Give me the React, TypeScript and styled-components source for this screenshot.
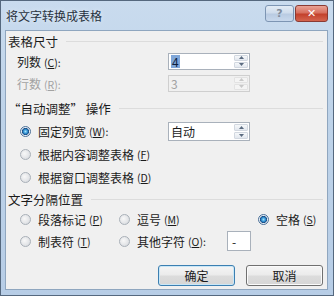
import React from 'react';
import styled, { createGlobalStyle } from 'styled-components';

const GlobalStyle = createGlobalStyle`
  html, body {
    margin: 0;
    padding: 0;
    background: #ffffff;
  }
  body {
    font-family: "Noto Sans CJK SC", "Liberation Sans", sans-serif;
    font-size: 12px;
    color: #1b1b1b;
  }
`;

const Window = styled.div`
  width: 334px;
  height: 296px;
  box-sizing: border-box;
  border: 1px solid #55687e;
  background: linear-gradient(180deg, #c9dbee 0%, #bed3e9 40%, #b7cde6 100%);
  display: flex;
  flex-direction: column;
`;

const TitleBar = styled.div`
  height: 29px;
  display: flex;
  align-items: flex-start;
  padding: 0 5px 0 5px;
`;

const Title = styled.div`
  flex: 1;
  padding-top: 6px;
  font-size: 12px;
  color: #28323e;
  text-shadow: 0 0 4px #e8f0f8;
`;

const CaptionButtons = styled.div`
  display: flex;
  gap: 1px;
  margin-top: 4px;
`;

const CaptionButton = styled.div<{ $close?: boolean }>`
  width: ${(p) => (p.$close ? '33px' : '29px')};
  height: 17px;
  box-sizing: border-box;
  border: 1px solid ${(p) => (p.$close ? '#8a3a33' : '#7d95b3')};
  border-radius: 3px;
  background: ${(p) =>
    p.$close
      ? 'linear-gradient(180deg, #e9a295 0%, #d7705f 45%, #c3412c 55%, #d4644e 100%)'
      : 'linear-gradient(180deg, #e2ebf5 0%, #cfdcec 45%, #b9cbe2 55%, #c8d8ec 100%)'};
  display: flex;
  align-items: center;
  justify-content: center;
  color: ${(p) => (p.$close ? '#ffffff' : '#7f8c9c')};
  font-family: "DejaVu Sans", sans-serif;
  font-weight: bold;
  font-size: 11px;
`;

const Body = styled.div`
  flex: 1;
  margin: 0 5px 5px 4px;
  background: #f0f0f0;
  border: 1px solid #8fa6bf;
  display: flex;
  flex-direction: column;
  padding: 0 3px 0 2px;
`;

const Row = styled.div<{ $h: number; $indent?: number }>`
  height: ${(p) => p.$h}px;
  display: flex;
  align-items: center;
  padding-left: ${(p) => p.$indent ?? 0}px;
  flex-shrink: 0;
`;

const GroupTitle = styled.span`
  white-space: nowrap;
  font-size: 12.5px;
  padding-right: 8px;
`;

const Rule = styled.div`
  flex: 1;
  height: 1px;
  background: #dcdcdc;
  margin-right: 1px;
`;

const Label = styled.span<{ $w?: number; $disabled?: boolean }>`
  width: ${(p) => (p.$w ? `${p.$w}px` : 'auto')};
  flex-shrink: 0;
  white-space: nowrap;
  color: ${(p) => (p.$disabled ? '#a2a2a2' : '#1b1b1b')};
`;

const Key = styled.span`
  font-size: 10.5px;
  margin-left: 3px;
  u {
    text-underline-offset: 1px;
  }
`;

const SpinBox = styled.div<{ $disabled?: boolean; $h: number }>`
  width: 82px;
  height: ${(p) => p.$h}px;
  box-sizing: border-box;
  border: 1px solid ${(p) => (p.$disabled ? '#cfcfcf' : '#a9b1bb')};
  background: ${(p) => (p.$disabled ? '#f0f0f0' : '#ffffff')};
  display: flex;
  align-items: stretch;
`;

const SpinValue = styled.div<{ $disabled?: boolean }>`
  flex: 1;
  display: flex;
  align-items: center;
  padding-left: 2px;
  color: ${(p) => (p.$disabled ? '#a2a2a2' : '#1b1b1b')};
`;

const Selected = styled.span`
  background: #7fa6d8;
  color: #0e1e3e;
  padding: 0 1px;
  line-height: 13px;
`;

const SpinButtons = styled.div`
  width: 14px;
  display: flex;
  flex-direction: column;
  gap: 1px;
  padding: 1px;
`;

const SpinArrow = styled.div<{ $disabled?: boolean }>`
  flex: 1;
  box-sizing: border-box;
  border: 1px solid ${(p) => (p.$disabled ? '#e2e2e2' : '#d2d8e0')};
  border-radius: 1px;
  background: ${(p) => (p.$disabled ? '#f4f4f4' : 'linear-gradient(180deg, #f6f8fa, #e3e8ef)')};
  display: flex;
  align-items: center;
  justify-content: center;
`;

const Radio = styled.span<{ $checked?: boolean }>`
  width: 11px;
  height: 11px;
  box-sizing: border-box;
  border-radius: 50%;
  border: 1px solid ${(p) => (p.$checked ? '#4c7199' : '#a9b0b8')};
  background: ${(p) =>
    p.$checked
      ? 'radial-gradient(circle, #9fe4ff 0%, #2a86c8 35%, #1d4f86 50%, #e8eef5 62%, #d6dde6 100%)'
      : 'radial-gradient(circle at 40% 40%, #f8f8f8 0%, #e2e4e7 60%, #cdd1d6 100%)'};
  margin-right: 7px;
  flex-shrink: 0;
`;

const Option = styled.div<{ $w?: number }>`
  display: flex;
  align-items: center;
  width: ${(p) => (p.$w ? `${p.$w}px` : 'auto')};
  flex-shrink: 0;
`;

const CharBox = styled.div`
  width: 24px;
  height: 20px;
  box-sizing: border-box;
  border: 1px solid #a9b1bb;
  background: #ffffff;
  display: flex;
  align-items: center;
  padding-left: 4px;
`;

const ButtonRow = styled.div`
  display: flex;
  justify-content: flex-end;
  gap: 11px;
  padding-right: 1px;
  margin-top: 10px;
`;

const Button = styled.button<{ $default?: boolean }>`
  width: 77px;
  height: 21px;
  box-sizing: border-box;
  border: 1px solid ${(p) => (p.$default ? '#3c7fb1' : '#707070')};
  border-radius: 3px;
  background: linear-gradient(180deg, #f5f5f5 0%, #ebebeb 48%, #dcdcdc 52%, #d6d6d6 100%);
  box-shadow: inset 0 0 0 1px ${(p) => (p.$default ? '#c9e7f7' : '#fbfbfb')};
  font-family: "Noto Sans CJK SC", sans-serif;
  font-size: 12px;
  color: #1b1b1b;
  padding: 0;
`;

const Arrow: React.FC<{ up?: boolean; disabled?: boolean }> = ({ up, disabled }) => (
  <svg width="5" height="3" viewBox="0 0 5 3">
    <path d={up ? 'M0 3 L2.5 0 L5 3 Z' : 'M0 0 L2.5 3 L5 0 Z'} fill={disabled ? '#c8c8c8' : '#5b6b80'} />
  </svg>
);

const Spinner: React.FC<{ value: React.ReactNode; disabled?: boolean; h?: number }> = ({ value, disabled, h = 17 }) => (
  <SpinBox $disabled={disabled} $h={h}>
    <SpinValue $disabled={disabled}>{value}</SpinValue>
    <SpinButtons>
      <SpinArrow $disabled={disabled}><Arrow up disabled={disabled} /></SpinArrow>
      <SpinArrow $disabled={disabled}><Arrow disabled={disabled} /></SpinArrow>
    </SpinButtons>
  </SpinBox>
);

const K: React.FC<{ k: string; colon?: boolean }> = ({ k, colon }) => (
  <Key>
    (<u>{k}</u>){colon ? ':' : ''}
  </Key>
);

const App: React.FC = () => {
  return (
    <>
      <GlobalStyle />
      <Window>
        <TitleBar>
          <Title>将文字转换成表格</Title>
          <CaptionButtons>
            <CaptionButton>?</CaptionButton>
            <CaptionButton $close>✕</CaptionButton>
          </CaptionButtons>
        </TitleBar>
        <Body>
          <Row $h={20}>
            <GroupTitle>表格尺寸</GroupTitle>
            <Rule />
          </Row>
          <Row $h={20} $indent={9}>
            <Label $w={151}>列数<K k="C" colon /></Label>
            <Spinner value={<Selected>4</Selected>} />
          </Row>
          <Row $h={24} $indent={9}>
            <Label $w={151} $disabled>行数<K k="R" colon /></Label>
            <Spinner value="3" disabled />
          </Row>
          <Row $h={26}>
            <GroupTitle>“自动调整” 操作</GroupTitle>
            <Rule />
          </Row>
          <Row $h={20} $indent={12}>
            <Option $w={148}>
              <Radio $checked />
              固定列宽<K k="W" colon />
            </Option>
            <Spinner value="自动" h={19} />
          </Row>
          <Row $h={26} $indent={12}>
            <Option>
              <Radio />
              根据内容调整表格<K k="F" />
            </Option>
          </Row>
          <Row $h={20} $indent={12}>
            <Option>
              <Radio />
              根据窗口调整表格<K k="D" />
            </Option>
          </Row>
          <Row $h={24}>
            <GroupTitle>文字分隔位置</GroupTitle>
            <Rule />
          </Row>
          <Row $h={16} $indent={12}>
            <Option $w={99}>
              <Radio />
              段落标记<K k="P" />
            </Option>
            <Option $w={139}>
              <Radio />
              逗号<K k="M" />
            </Option>
            <Option>
              <Radio $checked />
              空格<K k="S" />
            </Option>
          </Row>
          <Row $h={28} $indent={12}>
            <Option $w={99}>
              <Radio />
              制表符<K k="T" />
            </Option>
            <Option $w={108}>
              <Radio />
              其他字符<K k="O" colon />
            </Option>
            <CharBox>-</CharBox>
          </Row>
          <ButtonRow>
            <Button $default>确定</Button>
            <Button>取消</Button>
          </ButtonRow>
        </Body>
      </Window>
    </>
  );
};

export default App;
